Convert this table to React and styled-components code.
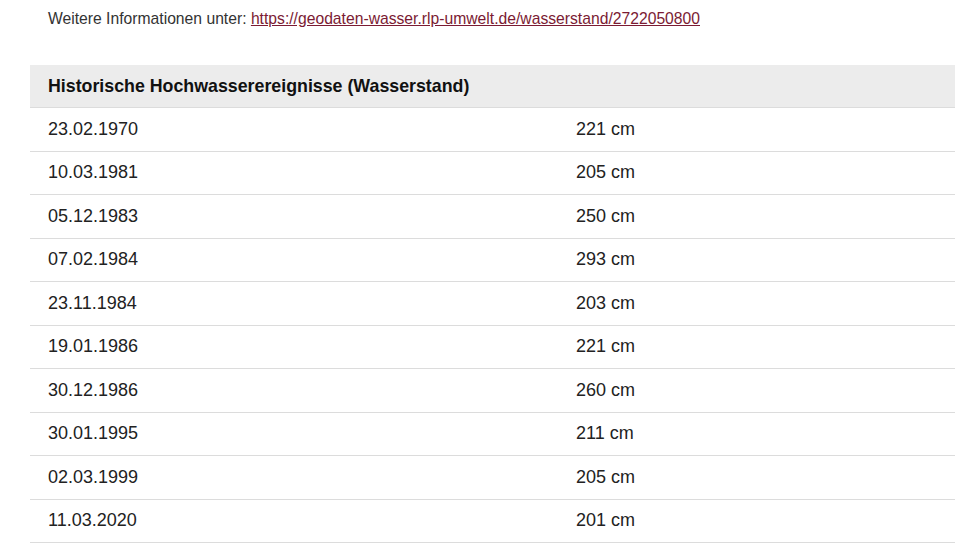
import React from 'react';
import styled, { createGlobalStyle } from 'styled-components';

const GlobalStyle = createGlobalStyle`
  body {
    margin: 0;
    background: #fff;
    font-family: Arial, "Liberation Sans", sans-serif;
    color: #222;
  }
`;

const Page = styled.div`
  padding: 9px 0 0 30px;
`;

const InfoLine = styled.p`
  margin: 0 0 0 18px;
  font-size: 15.7px;
  line-height: 20px;
  color: #333;
`;

const InfoLink = styled.a`
  color: #7b1b33;
  text-decoration: underline;
`;

const Table = styled.table`
  margin-top: 36px;
  width: 925px;
  border-collapse: collapse;
  font-size: 18px;
`;

const HeadCell = styled.th`
  background: #ececec;
  text-align: left;
  font-weight: bold;
  font-size: 17.8px;
  height: 42px;
  padding: 0 18px;
  border-bottom: 1px solid #dcdcdc;
  color: #111;
`;

const Row = styled.tr`
  height: 43.5px;
  border-bottom: 1px solid #dcdcdc;
`;

const Cell = styled.td`
  padding: 0 18px;
  width: ${p => (p.$first ? '492px' : 'auto')};
  color: #222;
`;

const events = [
  ['23.02.1970', '221 cm'],
  ['10.03.1981', '205 cm'],
  ['05.12.1983', '250 cm'],
  ['07.02.1984', '293 cm'],
  ['23.11.1984', '203 cm'],
  ['19.01.1986', '221 cm'],
  ['30.12.1986', '260 cm'],
  ['30.01.1995', '211 cm'],
  ['02.03.1999', '205 cm'],
  ['11.03.2020', '201 cm'],
];

const App = () => (
  <Page>
    <GlobalStyle />
    <InfoLine>
      Weitere Informationen unter:{' '}
      <InfoLink href="#">https://geodaten-wasser.rlp-umwelt.de/wasserstand/2722050800</InfoLink>
    </InfoLine>
    <Table>
      <thead>
        <tr>
          <HeadCell colSpan={2}>Historische Hochwasserereignisse (Wasserstand)</HeadCell>
        </tr>
      </thead>
      <tbody>
        {events.map(([date, level]) => (
          <Row key={date}>
            <Cell $first>{date}</Cell>
            <Cell>{level}</Cell>
          </Row>
        ))}
      </tbody>
    </Table>
  </Page>
);

export default App;
